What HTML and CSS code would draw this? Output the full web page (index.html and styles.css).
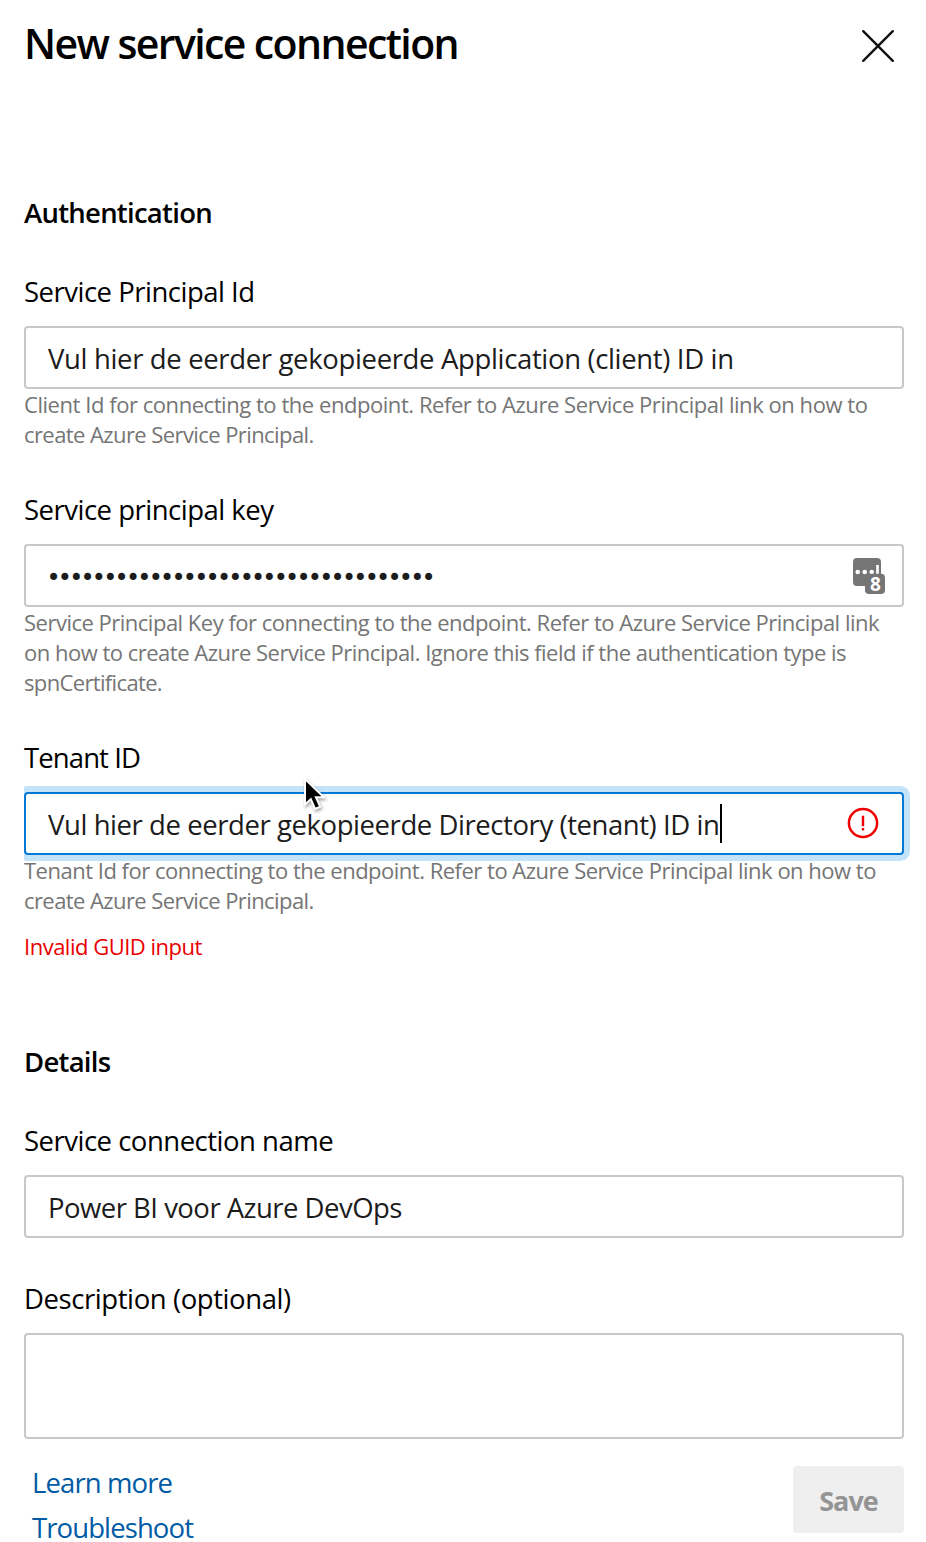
FILE: index.html
```html
<!DOCTYPE html>
<html lang="en">
<head>
<meta charset="utf-8">
<title>New service connection</title>
<link rel="stylesheet" href="styles.css">
</head>
<body>
<main class="panel">
  <header class="header">
    <h1 class="title">New service connection</h1>
    <svg class="close" viewBox="0 0 34 34" width="34" height="34"><path d="M2.2 2.2 31.8 31.8M31.8 2.2 2.2 31.8"/></svg>
  </header>

  <section class="section auth">
    <h2 class="heading">Authentication</h2>
    <div class="field">
      <div class="label">Service Principal Id</div>
      <div class="input"><span class="value value-client">Vul hier de eerder gekopieerde Application (client) ID in</span></div>
      <p class="help"><span class="help-client">Client Id for connecting to the endpoint. Refer to Azure Service Principal link on how to</span><br><span class="help-short">create Azure Service Principal.</span></p>
    </div>
    <div class="field">
      <div class="label">Service principal key</div>
      <div class="input">
        <span class="value value-key">••••••••••••••••••••••••••••••••••</span>
        <svg class="key-icon" viewBox="0 0 32 36" width="32" height="36">
          <rect width="28" height="28" rx="4" fill="#757575"/>
          <g fill="#fff"><circle cx="4.7" cy="14" r="2.3"/><circle cx="11.7" cy="14" r="2.3"/><circle cx="18.7" cy="14" r="2.3"/><rect x="23.2" y="7" width="2.6" height="10"/></g>
          <rect x="12" y="15.7" width="20" height="20.3" rx="4" fill="#757575"/>
          <text x="22.5" y="33.2" class="key-count">8</text>
        </svg>
      </div>
      <p class="help">Service Principal Key for connecting to the endpoint. Refer to Azure Service Principal link<br>on how to create Azure Service Principal. Ignore this field if the authentication type is<br><span class="help-cert">spnCertificate.</span></p>
    </div>
    <div class="field">
      <div class="label label-tenant">Tenant ID</div>
      <div class="input input-focused">
        <span class="value value-tenant">Vul hier de eerder gekopieerde Directory (tenant) ID in<span class="caret"></span></span>
        <svg class="error-icon" viewBox="0 0 32 32" width="32" height="32"><circle cx="16" cy="16" r="14.1" fill="none" stroke="#f00000" stroke-width="2.5"/><path d="M14.8 8.8h2.4v10.4h-2.4zM14.8 21h2.4v2.5h-2.4z" fill="#f00000"/></svg>
      </div>
      <p class="help">Tenant Id for connecting to the endpoint. Refer to Azure Service Principal link on how to<br><span class="help-short">create Azure Service Principal.</span></p>
      <p class="error">Invalid GUID input</p>
      <svg class="pointer" viewBox="0 0 30 38" width="30" height="38"><path d="M5 4v25.5l5.8-5.3 4.3 9.7 5.1-2.2-4.3-9.4h8z" fill="#000" stroke="#fff" stroke-width="2"/></svg>
    </div>
  </section>

  <section class="section details">
    <h2 class="heading">Details</h2>
    <div class="field">
      <div class="label">Service connection name</div>
      <div class="input"><span class="value value-name">Power BI voor Azure DevOps</span></div>
    </div>
    <div class="field field-description">
      <div class="label label-description">Description (optional)</div>
      <div class="input textarea"></div>
    </div>
  </section>

  <footer class="footer">
    <nav class="links"><a class="link">Learn more</a><a class="link">Troubleshoot</a></nav>
    <div class="save">Save</div>
  </footer>
</main>
</body>
</html>
```
FILE: styles.css
```css
* { box-sizing: border-box; }

body {
  margin: 0;
  background: #fff;
  color: #000;
  font-family: "Open Sans", sans-serif;
  font-size: 27.5px;
  line-height: 40px;
}

.panel {
  height: 1542px;
  padding: 14px 22px 0 24px;
  overflow: hidden;
  white-space: nowrap;
}

.header { display: flex; justify-content: space-between; height: 56px; padding-right: 9px; }
.title { margin: 0; font-size: 41px; font-weight: 600; line-height: 58px; letter-spacing: -1.6px; }
.close { margin-top: 15px; stroke: #111; stroke-width: 2.4; stroke-linecap: round; }

.auth { margin-top: 123px; }
.details { margin-top: 81px; }
.heading { margin: 0 0 38px; font-size: 27.5px; font-weight: 600; line-height: 40px; letter-spacing: -0.74px; }

.field { position: relative; margin-bottom: 40px; }
.auth .field:last-child { margin-bottom: 0; }
.details .heading { margin-bottom: 39px; }
.field-description { margin: 41px 0 0; }

.label { margin-bottom: 14px; letter-spacing: -0.5px; }
.auth .label { padding-top: 1px; }
.auth .label-tenant { letter-spacing: -0.9px; }
.label-description { letter-spacing: -0.42px; }

.input {
  display: flex;
  align-items: center;
  justify-content: space-between;
  height: 63px;
  padding-left: 22px;
  border: 2px solid #c8c8c8;
  border-radius: 4px;
  color: #1c1c1c;
}
.input-focused {
  border-color: #0078d4;
  box-shadow: 0 0 0 6px #c3e3f8;
  clip-path: inset(-6px -6px -6px 0);
}
.textarea { height: 106px; }

.value { padding-top: 3px; }
.value-client { letter-spacing: -0.35px; }
.value-tenant { position: relative; letter-spacing: -0.43px; }
.value-name { letter-spacing: -0.52px; }
.value-key { margin-left: -1.6px; padding-top: 4px; font-family: "DejaVu Sans", sans-serif; font-size: 24px; letter-spacing: -2.79px; }

.caret { position: absolute; right: -3px; top: 2px; width: 2px; height: 39px; background: #000; }
.key-icon { margin-right: 17px; }
.key-count { font: 700 19px "Open Sans", sans-serif; fill: #fff; text-anchor: middle; }
.error-icon { margin: 0 23px 2px 0; }

.help, .error { margin: 0; font-size: 22px; line-height: 30px; letter-spacing: -0.5px; color: #757575; }
.help-client { letter-spacing: -0.45px; }
.help-short { letter-spacing: -0.58px; }
.help-cert { letter-spacing: -0.65px; }
.error { margin-top: 16px; color: #e90000; }

.pointer { position: absolute; left: 276px; top: 38px; filter: drop-shadow(1px 2px 1.5px rgba(0, 0, 0, 0.35)); }

.footer { display: flex; justify-content: space-between; margin-top: 21px; }
.links { display: flex; flex-direction: column; padding-left: 8px; }
.link { line-height: 45px; letter-spacing: -0.9px; color: #005ba4; }
.save {
  width: 111px;
  height: 67px;
  margin-top: 6px;
  border-radius: 4px;
  background: #efefef;
  color: #949494;
  font-size: 27px;
  font-weight: 700;
  line-height: 69px;
  letter-spacing: -1px;
  text-align: center;
}
```
